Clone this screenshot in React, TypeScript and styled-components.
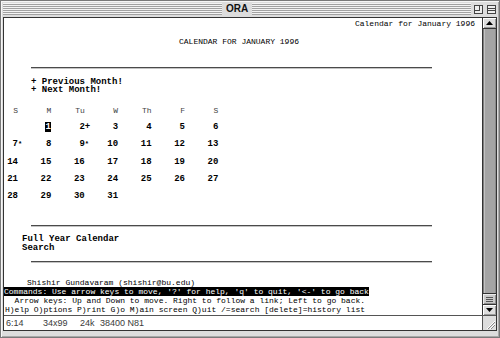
import * as React from "react";
import styled, { createGlobalStyle } from "styled-components";

const MONO = `"Liberation Mono", "DejaVu Sans Mono", monospace`;
const SANS = `"Liberation Sans", Arial, sans-serif`;

const GlobalStyle = createGlobalStyle`
  html, body {
    margin: 0;
    padding: 0;
    background: #dddddd;
  }
  body {
    width: 500px;
    height: 338px;
    overflow: hidden;
  }
`;

const Window = styled.div`
  box-sizing: border-box;
  width: 500px;
  height: 338px;
  display: flex;
  flex-direction: column;
  background: #dddddd;
  border: 1px solid #7a7a7a;
  box-shadow: inset 1px 1px 0 #f6f6f6, inset -1px -1px 0 #a8a8a8;
`;

const TitleBar = styled.div`
  height: 16px;
  flex: none;
  display: flex;
  align-items: center;
  padding: 0 2px;
`;

const Stripes = styled.div`
  flex: 1;
  height: 12px;
  background: repeating-linear-gradient(
    to bottom,
    #f4f4f4 0 1px,
    #a2a2a2 1px 2px
  );
`;

const Title = styled.div`
  padding: 0 4px;
  font-family: ${SANS};
  font-weight: bold;
  font-size: 10px;
  line-height: 16px;
  color: #111;
`;

const Widgets = styled.div`
  display: flex;
  align-items: center;
  gap: 4px;
  padding: 0 1px 0 3px;
`;

const Pane = styled.div`
  flex: 1;
  min-height: 0;
  margin: 0 2px 6px;
  border: 1px solid #333;
  display: flex;
  flex-direction: column;
`;

const Body = styled.div`
  flex: 1;
  min-height: 0;
  display: flex;
`;

const Screen = styled.div`
  flex: 1;
  min-width: 0;
  background: #fff;
  color: #000;
  font-family: ${MONO};
  font-size: 8px;
  line-height: 8.7px;
  display: flex;
  flex-direction: column;
  overflow: hidden;
`;

const Line = styled.div<{ $top?: number; $left?: number; $bold?: boolean }>`
  height: 8.7px;
  margin-top: ${p => p.$top ?? 0}px;
  padding-left: ${p => p.$left ?? 1}px;
  white-space: pre;
  font-weight: ${p => (p.$bold ? "bold" : "normal")};
  font-size: ${p => (p.$bold ? 9 : 8)}px;
`;

const RightLine = styled(Line)`
  text-align: right;
  padding-right: 7px;
`;

const Rule = styled.div<{ $top: number }>`
  margin-top: ${p => p.$top}px;
  margin-left: 27px;
  width: 401px;
  border-top: 1px solid #4a4a4a;
  border-bottom: 1px solid #c4c4c4;
`;

const DayGrid = styled.div<{ $top: number }>`
  margin-top: ${p => p.$top}px;
  margin-left: 3px;
  display: grid;
  grid-template-columns: repeat(7, 33.4px);
  grid-auto-rows: 17.36px;
  align-items: center;
`;

const Cell = styled.div`
  display: flex;
  font-size: 9px;
  font-weight: bold;
  line-height: 9px;
`;

const Num = styled.span`
  width: 11px;
  flex: none;
  text-align: right;
`;

const DayName = styled(Num)`
  font-weight: normal;
  font-size: 8px;
  color: #444;
`;

const Current = styled.span`
  background: #000;
  color: #fff;
  padding: 0 0.5px;
`;

const Mark = styled.span<{ $small?: boolean }>`
  font-size: ${p => (p.$small ? 7 : 9)}px;
  vertical-align: ${p => (p.$small ? "2px" : "0")};
`;

const Inverse = styled.span`
  background: #000;
  color: #fff;
`;

const Scrollbar = styled.div`
  width: 13px;
  flex: none;
  border-left: 1px solid #333;
  display: flex;
  flex-direction: column;
  background: #dddddd;
`;

const ArrowButton = styled.div<{ $down?: boolean }>`
  height: 10px;
  flex: none;
  display: flex;
  align-items: center;
  justify-content: center;
  background: #dddddd;
  box-shadow: inset 1px 1px 0 #fff, inset -1px -1px 0 #9a9a9a;
  ${p => (p.$down ? "border-top: 1px solid #333;" : "border-bottom: 1px solid #333;")}
`;

const Track = styled.div`
  flex: 1;
  background: #a4a4a4;
  box-shadow: inset 1px 0 0 #7d7d7d, inset 2px 0 0 #c2c2c2, inset -1px 0 0 #8a8a8a;
`;

const Thumb = styled.div`
  height: 10px;
  flex: none;
  border-top: 1px solid #333;
  background: #c9c9c9;
  box-shadow: inset 1px 1px 0 #ececec, inset -1px -1px 0 #8e8e8e;
  display: flex;
  align-items: center;
  justify-content: center;
`;

const Footer = styled.div`
  height: 14px;
  flex: none;
  display: flex;
  border-top: 1px solid #555;
`;

const Status = styled.div`
  flex: 1;
  background: #fff;
  display: flex;
  align-items: center;
  padding-left: 2px;
  font-family: ${SANS};
  font-size: 9px;
  color: #3a3a3a;
`;

const StatusItem = styled.span<{ $w?: number }>`
  flex: none;
  width: ${p => (p.$w ? `${p.$w}px` : "auto")};
`;

const GrowBox = styled.div`
  width: 13px;
  flex: none;
  border-left: 1px solid #555;
  background: #dddddd;
  display: flex;
  align-items: flex-end;
  justify-content: flex-end;
`;

const ZoomIcon = () => (
  <svg width="9" height="9" viewBox="0 0 9 9">
    <rect x="0.5" y="0.5" width="8" height="8" fill="#eee" stroke="#444" />
    <rect x="0.5" y="0.5" width="5" height="5" fill="none" stroke="#444" />
  </svg>
);

const CollapseIcon = () => (
  <svg width="9" height="9" viewBox="0 0 9 9">
    <rect x="0.5" y="0.5" width="8" height="8" fill="#eee" stroke="#444" />
    <line x1="0" y1="3.5" x2="9" y2="3.5" stroke="#444" />
    <line x1="0" y1="5.5" x2="9" y2="5.5" stroke="#444" />
  </svg>
);

const Triangle = ({ down }: { down?: boolean }) => (
  <svg width="7" height="4" viewBox="0 0 7 4">
    <polygon points={down ? "0,0 7,0 3.5,4" : "3.5,0 7,4 0,4"} fill="#000" />
  </svg>
);

const Grip = () => (
  <svg width="7" height="5" viewBox="0 0 7 5">
    <line x1="0" y1="0.5" x2="7" y2="0.5" stroke="#555" />
    <line x1="0" y1="2.5" x2="7" y2="2.5" stroke="#555" />
    <line x1="0" y1="4.5" x2="7" y2="4.5" stroke="#555" />
  </svg>
);

const GrowIcon = () => (
  <svg width="12" height="12" viewBox="0 0 12 12">
    <line x1="3" y1="11" x2="11" y2="3" stroke="#fff" />
    <line x1="4" y1="11" x2="11" y2="4" stroke="#8a8a8a" />
    <line x1="6" y1="11" x2="11" y2="6" stroke="#fff" />
    <line x1="7" y1="11" x2="11" y2="7" stroke="#8a8a8a" />
  </svg>
);

type Day = { n?: number; mark?: string; current?: boolean };

const days: Day[] = [
  {},
  { n: 1, current: true },
  { n: 2, mark: "+" },
  { n: 3 },
  { n: 4 },
  { n: 5 },
  { n: 6 },
  { n: 7, mark: "*" },
  { n: 8 },
  { n: 9, mark: "*" },
  ...Array.from({ length: 22 }, (_, i) => ({ n: i + 10 }))
];

const weekdays = ["S", "M", "Tu", "W", "Th", "F", "S"];

const App: React.FunctionComponent = () => {
  return (
    <>
      <GlobalStyle />
      <Window>
        <TitleBar>
          <Stripes />
          <Title>ORA</Title>
          <Stripes />
          <Widgets>
            <ZoomIcon />
            <CollapseIcon />
          </Widgets>
        </TitleBar>
        <Pane>
          <Body>
            <Screen>
              <RightLine $top={1.6}>Calendar for January 1996</RightLine>
              <Line $top={9.3} $left={175}>
                CALENDAR FOR JANUARY 1996
              </Line>
              <Rule $top={20.7} />
              <Line $top={8.6} $left={27} $bold>
                + Previous Month!
              </Line>
              <Line $left={27} $bold>
                + Next Month!
              </Line>
              <DayGrid $top={6.5}>
                {weekdays.map((d, i) => (
                  <Cell key={`w${i}`}>
                    <DayName>{d}</DayName>
                  </Cell>
                ))}
                {days.map((d, i) => (
                  <Cell key={`d${i}`}>
                    <Num>{d.current ? <Current>{d.n}</Current> : d.n}</Num>
                    {d.mark && <Mark $small={d.mark === "*"}>{d.mark}</Mark>}
                  </Cell>
                ))}
              </DayGrid>
              <Rule $top={19.3} />
              <Line $top={8.6} $left={18} $bold>
                Full Year Calendar
              </Line>
              <Line $left={18} $bold>
                Search
              </Line>
              <Rule $top={8} />
              <Line $top={16.6} $left={23}>
                Shishir Gundavaram (shishir@bu.edu)
              </Line>
              <Line $left={0}>
                <Inverse>
                  Commands: Use arrow keys to move, '?' for help, 'q' to quit, '&lt;-' to go back
                </Inverse>
              </Line>
              <Line>  Arrow keys: Up and Down to move. Right to follow a link; Left to go back.</Line>
              <Line>H)elp O)ptions P)rint G)o M)ain screen Q)uit /=search [delete]=history list</Line>
            </Screen>
            <Scrollbar>
              <ArrowButton>
                <Triangle />
              </ArrowButton>
              <Track />
              <Thumb>
                <Grip />
              </Thumb>
              <ArrowButton $down>
                <Triangle down />
              </ArrowButton>
            </Scrollbar>
          </Body>
          <Footer>
            <Status>
              <StatusItem $w={37}>6:14</StatusItem>
              <StatusItem $w={37}>34x99</StatusItem>
              <StatusItem $w={20}>24k</StatusItem>
              <StatusItem>38400 N81</StatusItem>
            </Status>
            <GrowBox>
              <GrowIcon />
            </GrowBox>
          </Footer>
        </Pane>
      </Window>
    </>
  );
};

export default App;
